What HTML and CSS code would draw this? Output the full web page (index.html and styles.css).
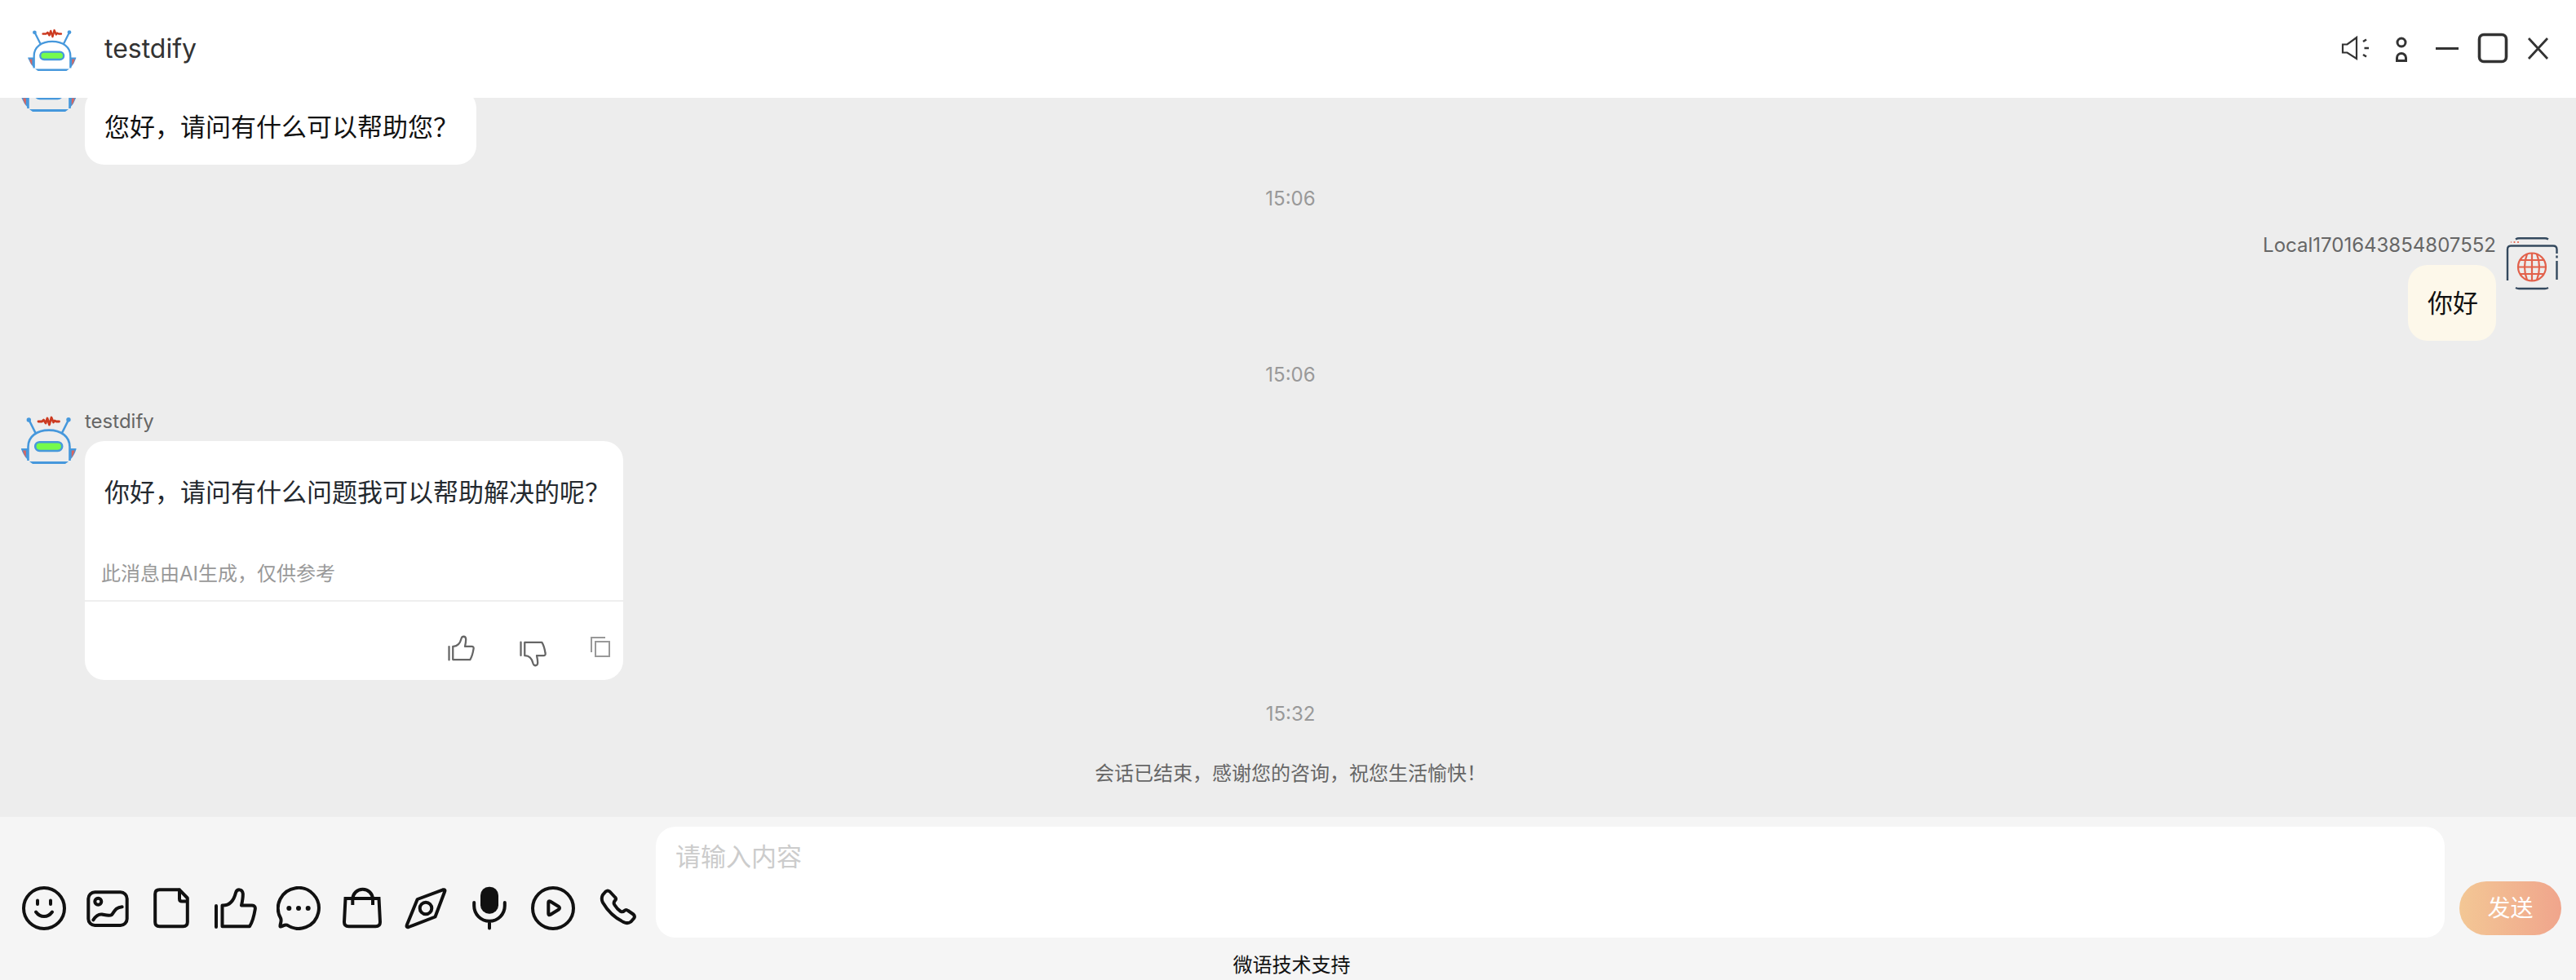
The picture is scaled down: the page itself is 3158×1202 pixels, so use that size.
FILE: index.html
```html
<!DOCTYPE html>
<html lang="zh-CN">
<head>
<meta charset="utf-8">
<meta name="viewport" content="width=device-width, initial-scale=1">
<title>testdify</title>
<link rel="stylesheet" href="styles.css">
</head>
<body>
<svg class="sprite" aria-hidden="true">
  <symbol id="robot" viewBox="0 0 68 64">
    <path d="M21 12h4.500l2-2 2.500 4 2-6 2.500 8 2.500-9 2.500 6 1.500-2 2 1h3.500" fill="none" stroke="#cc3a20" stroke-width="2.800" stroke-linejoin="round" stroke-linecap="round"/>
    <g fill="none" stroke="#4698dc" stroke-width="2.600">
      <path d="M9.500 10 17.500 26M58 10 50 26"/>
      <path d="M8.500 60V43C8.500 30.500 19 22.600 34 22.600S59.500 30.500 59.500 43V60"/>
    </g>
    <g fill="#4698dc"><circle cx="9.300" cy="10" r="2.700"/><circle cx="58" cy="9.800" r="2.700"/>
      <path d="M0 45H8V59Q3 54 0 46ZM67.500 45H60V59Q65 54 67.500 46Z"/>
      <path d="M10 61H58L54 64H14Z"/></g>
    <path d="M2 47.500H5.800V56.500Q3 52 2 47.500ZM65.600 47.500H61.800V56.500Q64.600 52 65.600 47.500Z" fill="#d9655f"/>
    <rect x="17.200" y="37.200" width="33" height="10.800" rx="5.400" fill="#75fb4c" stroke="#4698dc" stroke-width="2.600"/>
  </symbol>
  <symbol id="thumb" viewBox="0 0 54 54">
    <path d="M4 24V50M11.500 23.500C22 24 26 16 28 8C29.500 3 36 3 36.800 9C37 14 36 19 35 23.500H48C51 23.500 52.300 25.500 51.700 28.500C50.500 36 49 43 45 49.300H11.500Z" fill="none" stroke="currentColor" stroke-linecap="round" stroke-linejoin="round"/>
  </symbol>
</svg>

<div class="chat">
  <header class="bar">
    <svg class="bar-avatar" role="img" aria-label="testdify"><use href="#robot"/></svg>
    <h1 class="bar-title">testdify</h1>
    <div class="bar-actions">
      <button class="bar-btn" type="button" aria-label="声音"><svg width="36" height="38" viewBox="0 0 36 38" fill="none" stroke="currentColor" stroke-width="2.600"><path d="M2 14.500V24.500H7.500L19 32V6L7.500 14.500Z" stroke-width="2.200"/><path d="M27 11 31 8.500M28.500 19H34M27 27 31 29.500"/></svg></button>
      <button class="bar-btn" type="button" aria-label="访客"><svg width="36" height="38" viewBox="0 0 36 38" fill="none" stroke="currentColor" stroke-width="3"><circle cx="18" cy="12" r="5"/><path d="M12.500 34.500V31A5.500 5.500 0 0 1 23.500 31V34.500Z"/></svg></button>
      <button class="bar-btn" type="button" aria-label="最小化"><svg width="36" height="38" viewBox="0 0 36 38" stroke="currentColor" stroke-width="3"><path d="M4 19.500H32"/></svg></button>
      <button class="bar-btn" type="button" aria-label="最大化"><svg width="38" height="38" viewBox="0 0 38 38" fill="none" stroke="currentColor" stroke-width="3.600"><rect x="2.500" y="2.500" width="33" height="33" rx="5.500"/></svg></button>
      <button class="bar-btn" type="button" aria-label="关闭"><svg width="36" height="38" viewBox="0 0 36 38" stroke="currentColor" stroke-width="2.800"><path d="M6 7 29 32M29 7 6 32"/></svg></button>
    </div>
  </header>

  <main class="log">
    <article class="msg">
      <svg class="avatar" aria-hidden="true"><use href="#robot"/></svg>
      <div class="msg-main">
        <p class="bubble">您好，请问有什么可以帮助您？</p>
      </div>
    </article>
    <time class="time">15:06</time>
    <article class="msg msg-own">
      <svg class="avatar" viewBox="0 0 68 68" aria-hidden="true">
        <g fill="none" stroke="#34495e" stroke-width="2.400">
          <path d="M14 4.500Q16 3.200 18 3.200H50Q52 3.200 54 4.500M4 55V17Q4 12.500 8 12.500H60Q64.500 12.500 64.500 17V22M64.500 24.500V27.500M64.500 31V54M14 64Q16 65 18 65H50Q52 65 54 64"/>
        </g>
        <g fill="#e2614b"><circle cx="8.500" cy="8" r=".7"/><circle cx="12.500" cy="8" r="1.100"/><circle cx="17" cy="8" r="1.100"/></g>
        <g fill="none" stroke="#e2614b" stroke-width="2.200">
          <circle cx="34" cy="38.500" r="17"/>
          <path d="M34 21.500V55.500M17 38.500H51M20 30H48M20 47H48"/>
          <path d="M28 22.500Q22 38.500 28 54.500M40 22.500Q46 38.500 40 54.500"/>
        </g>
      </svg>
      <div class="msg-main">
        <span class="name">Local1701643854807552</span>
        <p class="bubble">你好</p>
      </div>
    </article>
    <time class="time">15:06</time>
    <article class="msg">
      <svg class="avatar" aria-hidden="true"><use href="#robot"/></svg>
      <div class="msg-main">
        <span class="name">testdify</span>
        <div class="card">
          <p class="card-text">你好，请问有什么问题我可以帮助解决的呢？</p>
          <p class="card-note">此消息由AI生成，仅供参考</p>
          <div class="card-actions">
            <button class="icon-btn" type="button" aria-label="赞"><svg width="34" height="40" viewBox="0 0 34 40" stroke-width="3.600"><use href="#thumb" width="34" height="34"/></svg></button>
            <button class="icon-btn" type="button" aria-label="踩"><svg width="34" height="40" viewBox="0 0 34 40" stroke-width="3.600"><g transform="matrix(1 0 0 -1 0 41)"><use href="#thumb" width="34" height="34"/></g></svg></button>
            <button class="icon-btn icon-btn-soft" type="button" aria-label="复制"><svg width="24" height="40" viewBox="0 0 24 40" fill="none" stroke="currentColor" stroke-width="2"><path d="M1 22V4H18"/><rect x="6" y="9" width="17" height="18"/></svg></button>
          </div>
        </div>
      </div>
    </article>
    <time class="time">15:32</time>
    <p class="notice">会话已结束，感谢您的咨询，祝您生活愉快！</p>
  </main>

  <footer class="foot">
    <form class="composer">
      <div class="tools">
        <button class="tool" type="button" aria-label="表情"><svg viewBox="0 0 54 54"><circle cx="27" cy="27" r="25"/><path d="M19 17.500V22M35 17.500V22M17 31.500Q21 37 27 37T37 31.500"/></svg></button>
        <button class="tool" type="button" aria-label="图片"><svg viewBox="0 0 54 54"><rect x="3.300" y="7.300" width="47.400" height="40.700" rx="8"/><circle cx="15.300" cy="18.800" r="4"/><path d="M9.300 41.300C13 35.500 16 34 20 34.500C25 35.500 29 37 32 35C35.500 31 36 26 44.700 25.300"/></svg></button>
        <button class="tool" type="button" aria-label="文件"><svg viewBox="0 0 54 54"><path d="M37 4.300H12.500Q7.200 4.300 7.200 9.500V44Q7.200 49.300 12.500 49.300H41.500Q46.800 49.300 46.800 44V14.500L37 4.300V15.500Q37 18.500 40 18.500H46.800"/></svg></button>
        <button class="tool" type="button" aria-label="赞"><svg viewBox="0 0 54 54"><use href="#thumb"/></svg></button>
        <button class="tool" type="button" aria-label="快捷回复"><svg viewBox="0 0 54 54"><path d="M13 47.700A25 25 0 1 0 5 39C7 43 4 46 4.500 49.500C7 50 9 46.500 13 47.700Z"/><g class="solid"><circle cx="15.300" cy="27" r="3"/><circle cx="27" cy="27" r="3"/><circle cx="38.700" cy="27" r="3"/></g></svg></button>
        <button class="tool" type="button" aria-label="商品"><svg viewBox="0 0 54 54"><path d="M6.500 15H47.500L49 44Q49 49.300 43.500 49.300H10.500Q5 49.300 5 44ZM15.300 23V16A12 12 0 0 1 40 16V23" stroke-linecap="butt" stroke-linejoin="miter"/></svg></button>
        <button class="tool" type="button" aria-label="位置"><svg viewBox="0 0 54 54"><path d="M48 4.300Q51.500 3.500 50 7L38.500 37.500L6 50Q2.500 51 4 47L16.700 16Z"/><circle cx="27" cy="27" r="7.300"/></svg></button>
        <button class="tool" type="button" aria-label="语音"><svg viewBox="0 0 54 54"><rect class="solid" x="16" y=".7" width="22" height="33" rx="10.500"/><path d="M8.200 20V24A18.800 18.800 0 0 0 45.800 24V20M27 43V51.500"/></svg></button>
        <button class="tool" type="button" aria-label="视频"><svg viewBox="0 0 54 54"><circle cx="27" cy="27" r="25"/><path d="M21.300 20Q21.300 17.500 23.500 18.500L34 25Q36 26.800 34 28.500L23.500 35Q21.300 36 21.300 33.500Z"/></svg></button>
        <button class="tool" type="button" aria-label="电话"><svg viewBox="0 0 54 54"><path d="M13.500 6.500Q16 4.500 18.500 6.500L25 13.500Q27 15.500 25 17.500Q22.500 20 24.500 23Q27.500 28 32 31Q34.500 32 36.500 30Q38.500 28 41 30L47.500 34.500Q50 37 48 39.500L44.500 43.500Q40.500 46.500 35.500 44C25 39 15.500 29.500 10 20Q7.500 15 10 10.500Z"/></svg></button>
      </div>
      <textarea class="input" aria-label="消息" placeholder="请输入内容"></textarea>
      <button class="send" type="submit">发送</button>
    </form>
    <a class="credit" href="#">微语技术支持</a>
  </footer>
</div>
</body>
</html>
```
FILE: styles.css
```css
* {
  box-sizing: border-box;
}

body {
  margin: 0;
  font-family: Inter, "Noto Sans CJK SC", sans-serif;
  font-size: 31px;
  line-height: 45px;
  color: #111;
}

h1,
p {
  margin: 0;
}

button {
  padding: 0;
  border: 0;
  background: none;
  color: inherit;
  font: inherit;
  cursor: pointer;
}

svg {
  display: block;
}

.sprite {
  position: absolute;
  width: 0;
  height: 0;
}

.chat {
  display: flex;
  flex-direction: column;
  height: 100vh;
  background: #ededed;
}

/* Title bar */
.bar {
  display: flex;
  flex: none;
  align-items: center;
  height: 120px;
  padding: 0 18px 2px 34px;
  background: #fff;
  color: #333;
}

.bar-avatar {
  width: 60px;
  height: 56px;
}

.bar-title {
  flex: 1;
  margin-left: 34px;
  font-size: 32px;
  font-weight: 400;
}

.bar-actions {
  display: flex;
}

.bar-btn {
  display: grid;
  place-items: center;
  width: 56px;
  height: 56px;
}

/* Conversation */
.log {
  display: flex;
  flex: 1;
  flex-direction: column;
  justify-content: flex-end;
  min-height: 0;
  padding: 0 20px 36px 26px;
  overflow: hidden;
}

.msg {
  display: flex;
  flex: none;
  gap: 10px;
  min-height: 129px;
}

.msg-own {
  flex-direction: row-reverse;
}

.avatar {
  flex: none;
  width: 68px;
  height: 64px;
}

.msg-own .avatar {
  height: 68px;
}

.msg-main {
  display: flex;
  flex-direction: column;
  align-items: flex-start;
  justify-content: flex-end;
}

.msg-own .msg-main {
  align-items: flex-end;
}

.name {
  height: 36px;
  color: #666;
  font-size: 24px;
  line-height: 24px;
}

.bubble {
  padding: 24px 22px 24px 24px;
  border-radius: 24px;
  background: #fff;
}

.msg-own .bubble {
  background: #fdf8ea;
}

.time,
.notice {
  flex: none;
  font-size: 24px;
  line-height: 35px;
  text-align: center;
}

.time {
  margin: 24px 0 28px;
  color: #999;
}

.notice {
  margin-top: 10px;
  color: #666;
}

.card {
  border-radius: 24px;
  background: #fff;
}

.card-text {
  padding: 40px 16px 60px 24px;
  color: #24292f;
}

.card-note {
  padding: 0 20px 14px;
  border-bottom: 2px solid #eee;
  color: #999;
  font-size: 24px;
  line-height: 36px;
}

.card-actions {
  display: flex;
  justify-content: flex-end;
  gap: 54px;
  padding: 40px 16px 16px;
  color: #666;
}

.icon-btn-soft {
  color: #999;
}

/* Composer */
.foot {
  display: flex;
  flex: none;
  flex-direction: column;
  align-items: center;
  padding: 12px 18px 0 27px;
  background: #f5f5f5;
}

.composer {
  display: flex;
  align-items: flex-end;
  gap: 18px;
  width: 100%;
}

.tools {
  display: flex;
  gap: 24px;
  padding: 0 3px 9px 0;
}

.tool svg {
  width: 54px;
  height: 54px;
  fill: none;
  stroke: #111;
  stroke-width: 4px;
  stroke-linecap: round;
  stroke-linejoin: round;
}

.tool .solid {
  fill: #111;
  stroke: none;
}

.input {
  display: block;
  flex: 1;
  min-width: 0;
  height: 136px;
  padding: 14px 24px;
  border: 0;
  border-radius: 24px;
  outline: 0;
  background: #fff;
  color: inherit;
  font: inherit;
  resize: none;
}

.input::placeholder {
  color: #ccc;
}

.send {
  width: 125px;
  height: 66px;
  margin-bottom: 3px;
  border-radius: 33px;
  background: linear-gradient(90deg, #f3c795, #f0a58c);
  color: #fff;
  font-size: 28px;
}

.credit {
  padding-top: 16px;
  color: #111;
  font-size: 24px;
  line-height: 36px;
  text-decoration: none;
}
```
